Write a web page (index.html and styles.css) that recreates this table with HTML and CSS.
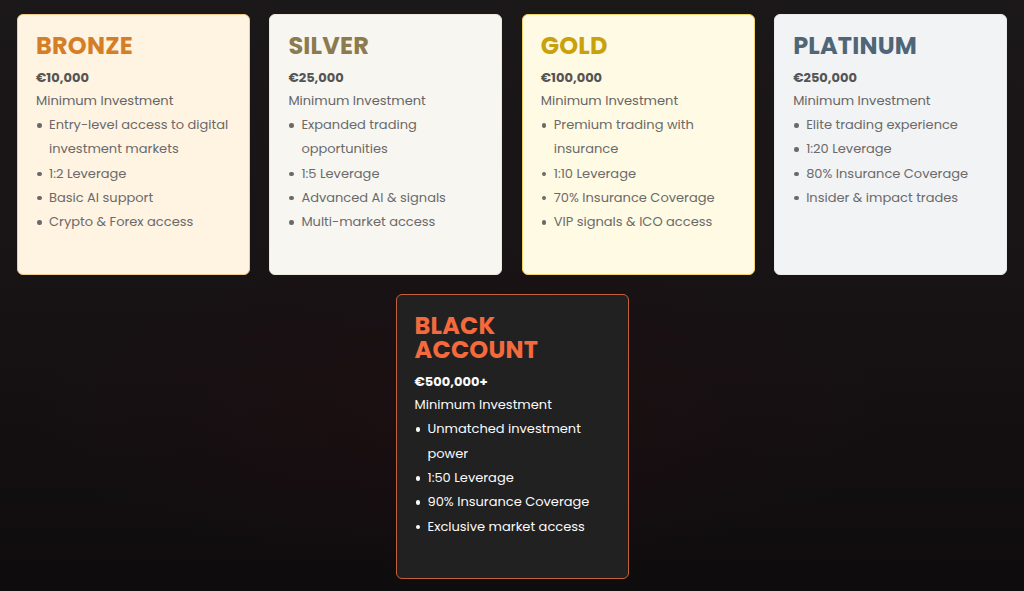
FILE: index.html
```html
<!DOCTYPE html>
<html lang="en">
<head>
<meta charset="utf-8">
<title>Account Tiers</title>
<link rel="stylesheet" href="styles.css">
</head>
<body>
<main class="tiers">
  <section class="row row-top">
    <article class="card bronze">
      <h2 class="title">BRONZE</h2>
      <p class="price">€10,000</p>
      <p class="label">Minimum Investment</p>
      <ul class="features">
        <li>Entry-level access to digital investment markets</li>
        <li>1:2 Leverage</li>
        <li>Basic AI support</li>
        <li>Crypto &amp; Forex access</li>
      </ul>
    </article>
    <article class="card silver">
      <h2 class="title">SILVER</h2>
      <p class="price">€25,000</p>
      <p class="label">Minimum Investment</p>
      <ul class="features">
        <li>Expanded trading opportunities</li>
        <li>1:5 Leverage</li>
        <li>Advanced AI &amp; signals</li>
        <li>Multi-market access</li>
      </ul>
    </article>
    <article class="card gold">
      <h2 class="title">GOLD</h2>
      <p class="price">€100,000</p>
      <p class="label">Minimum Investment</p>
      <ul class="features">
        <li>Premium trading with insurance</li>
        <li>1:10 Leverage</li>
        <li>70% Insurance Coverage</li>
        <li>VIP signals &amp; ICO access</li>
      </ul>
    </article>
    <article class="card platinum">
      <h2 class="title">PLATINUM</h2>
      <p class="price">€250,000</p>
      <p class="label">Minimum Investment</p>
      <ul class="features">
        <li>Elite trading experience</li>
        <li>1:20 Leverage</li>
        <li>80% Insurance Coverage</li>
        <li>Insider &amp; impact trades</li>
      </ul>
    </article>
  </section>
  <section class="row row-bottom">
    <article class="card black">
      <h2 class="title">BLACK<br>ACCOUNT</h2>
      <p class="price">€500,000+</p>
      <p class="label">Minimum Investment</p>
      <ul class="features">
        <li>Unmatched investment power</li>
        <li>1:50 Leverage</li>
        <li>90% Insurance Coverage</li>
        <li>Exclusive market access</li>
      </ul>
    </article>
  </section>
</main>
</body>
</html>
```
FILE: styles.css
```css
* { box-sizing: border-box; }

html, body {
  margin: 0;
  height: 100%;
}

body {
  font-family: "Poppins", "Open Sans", "DejaVu Sans", sans-serif;
  background:
    radial-gradient(ellipse 60% 40% at 45% 70%, rgba(40, 12, 16, 0.35), transparent 70%),
    linear-gradient(180deg, #1b1819 0%, #181315 45%, #0f0c0e 100%);
  color: #666;
  overflow: hidden;
}

.tiers {
  padding: 14px 17px 0;
  display: flex;
  flex-direction: column;
  gap: 19px;
}

.row-top {
  display: grid;
  grid-template-columns: repeat(4, 1fr);
  gap: 19.5px;
}

.row-bottom {
  display: flex;
  justify-content: center;
}

.card {
  border-radius: 6px;
  border: 1px solid transparent;
  padding: 19px 18px 40px;
}

.row-bottom .card {
  width: 233px;
  padding-bottom: 39px;
}

.title {
  margin: 0 0 10px;
  font-size: 24px;
  line-height: 24px;
  font-weight: 700;
  letter-spacing: 0.2px;
}

.price {
  margin: 0;
  font-size: 13px;
  line-height: 20px;
  font-weight: 700;
  color: #555;
}

.label {
  margin: 0;
  font-size: 13px;
  line-height: 25px;
  color: #666;
}

.features {
  list-style: none;
  margin: 0;
  padding: 0 0 0 13px;
  font-size: 13px;
  line-height: 24.3px;
  color: #6a6a6a;
}

.features li {
  position: relative;
}

.features li::before {
  content: "";
  position: absolute;
  left: -12px;
  top: 10px;
  width: 4.5px;
  height: 4.5px;
  border-radius: 50%;
  background: currentColor;
}

.bronze {
  background: #fff3e1;
  border-color: #f1c98c;
}
.bronze .title { color: #d47f27; }

.silver {
  background: #f8f6f1;
  border-color: #ece8dc;
}
.silver .title { color: #8b7b4f; }

.gold {
  background: #fffae3;
  border-color: #f1d36a;
}
.gold .title { color: #c9a10c; }

.platinum {
  background: #f2f3f4;
  border-color: #e8eaec;
}
.platinum .title { color: #4e6677; }

.black {
  background: #222121;
  border-color: #c5603c;
}
.black .title { color: #f46a3d; }
.black .price,
.black .label,
.black .features { color: #fafafa; }
```
